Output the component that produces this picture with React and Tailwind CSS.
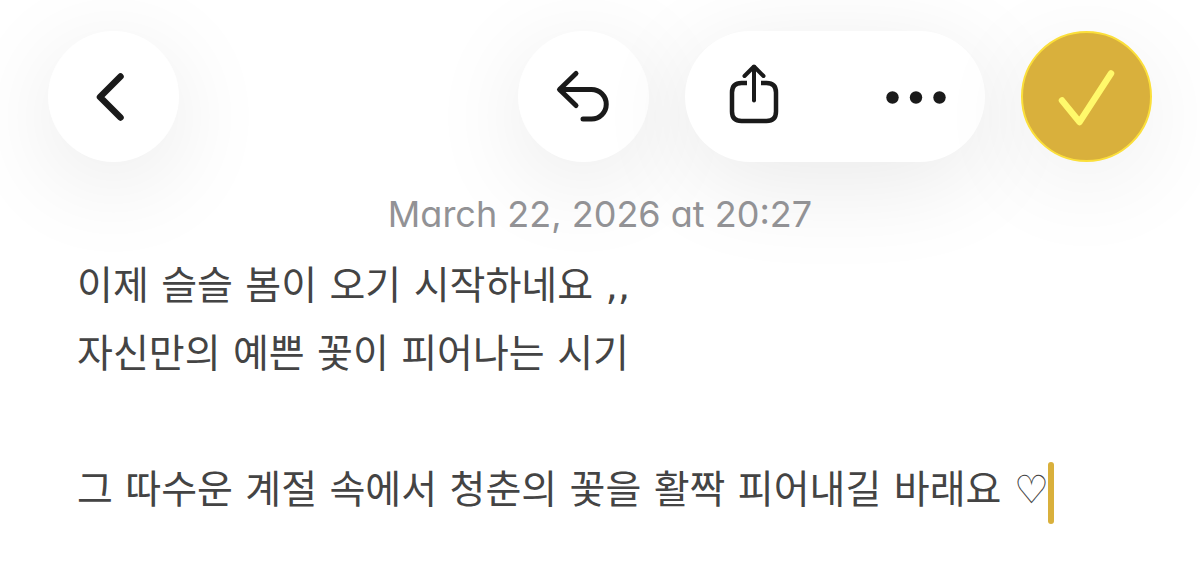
import React, { useState } from "react";

const NOTE = `이제 슬슬 봄이 오기 시작하네요 ,,
자신만의 예쁜 꽃이 피어나는 시기

그 따수운 계절 속에서 청춘의 꽃을 활짝 피어내길 바래요 ♡`;

const BackIcon = () => (
  <svg width="66" height="66" viewBox="0 0 66 66" fill="none" stroke="#1a1a1a" strokeWidth="6.500" strokeLinecap="round" strokeLinejoin="round" aria-hidden="true">
    <path d="M39.500 12.500 19 33 39.500 53.500" />
  </svg>
);

const UndoIcon = () => (
  <svg width="66" height="66" viewBox="0 0 66 66" fill="none" stroke="#1a1a1a" strokeWidth="5" strokeLinecap="round" strokeLinejoin="round" aria-hidden="true">
    <path d="M25 9.500 8.500 25.500 25 41.500" />
    <path d="M9.500 25.500H40.500A14.500 14.500 0 0 1 40.500 55H32" />
  </svg>
);

const ShareIcon = () => (
  <svg width="66" height="66" viewBox="0 0 66 66" fill="none" stroke="#1a1a1a" strokeLinecap="round" strokeLinejoin="round" aria-hidden="true">
    <path strokeWidth="4" d="M32 36.500V3" />
    <path strokeWidth="4" d="M22.500 12 32 2.500 41.500 12" />
    <path strokeWidth="4.500" strokeLinecap="butt" d="M25 19H19.500Q10 19 10 28.500V47.500Q10 57 19.500 57H44.500Q54 57 54 47.500V28.500Q54 19 44.500 19H39" />
  </svg>
);

const MoreIcon = () => (
  <svg width="66" height="66" viewBox="0 0 66 66" fill="#1a1a1a" aria-hidden="true">
    <circle cx="9.500" cy="33.500" r="6.200" />
    <circle cx="33" cy="33.500" r="6.200" />
    <circle cx="56.500" cy="33.500" r="6.200" />
  </svg>
);

const CheckIcon = () => (
  <svg width="66" height="66" viewBox="0 0 66 66" fill="none" stroke="#fff96b" strokeWidth="6.500" strokeLinecap="round" strokeLinejoin="round" aria-hidden="true">
    <path d="M8 36.500 25.500 58 57 9.500" />
  </svg>
);

const GlassButton = ({ label, children }) => (
  <button
    type="button"
    aria-label={label}
    className="flex size-[131px] items-center justify-center rounded-full bg-white shadow-[0_20px_100px_rgba(0,0,0,0.09)]"
  >
    {children}
  </button>
);

const Toolbar = () => (
  <header className="flex items-center justify-between px-12 pt-[31px]">
    <GlassButton label="Back">
      <BackIcon />
    </GlassButton>

    <div className="flex items-center gap-9">
      <GlassButton label="Undo">
        <UndoIcon />
      </GlassButton>

      <div className="flex w-[300px] justify-between rounded-full bg-white px-1 shadow-[0_20px_100px_rgba(0,0,0,0.09)]">
        <button type="button" aria-label="Share" className="flex size-[131px] items-center justify-center">
          <ShareIcon />
        </button>
        <button type="button" aria-label="More" className="flex size-[131px] items-center justify-center">
          <MoreIcon />
        </button>
      </div>

      <button
        type="button"
        aria-label="Done"
        className="flex size-[131px] items-center justify-center rounded-full border-2 border-[#fbdf3a] bg-[#d9b03c] shadow-[0_20px_100px_rgba(0,0,0,0.07)]"
      >
        <CheckIcon />
      </button>
    </div>
  </header>
);

export default function App() {
  const [note, setNote] = useState(NOTE);

  return (
    <div className="min-h-screen overflow-hidden bg-white">
      <Toolbar />
      <main className="pt-7">
        <p className="text-center font-['Inter',sans-serif] text-[36px] leading-12 text-[#929295] [font-feature-settings:'cv11']">
          <time dateTime="2026-03-22T20:27">March 22, 2026 at 20:27</time>
        </p>
        <div className="relative mt-3.5 pr-12 pl-[77px]">
          <textarea
            aria-label="Note"
            rows={4}
            spellCheck={false}
            value={note}
            onChange={(e) => setNote(e.target.value)}
            className="block w-full resize-none overflow-hidden bg-transparent font-['DejaVu_Sans','Noto_Sans_CJK_KR',sans-serif] text-[39px] leading-[68px] text-[#444444] caret-[#d9b03c] outline-none"
          />
          {/* insertion point after the last character */}
          <span aria-hidden="true" className="absolute bottom-0 left-[1048px] h-[62px] w-[6px] rounded-full bg-[#d9b03c]" />
        </div>
      </main>
    </div>
  );
}
